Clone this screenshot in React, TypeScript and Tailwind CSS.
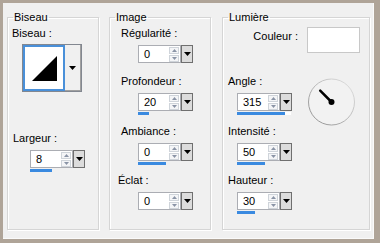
import React from 'react';

const ArrowBtn = ({ up }: { up?: boolean }) => (
  <div className="h-[7px] w-[10px] border border-[#cfd4da] bg-[#f4f5f7] flex items-center justify-center">
    <svg width="5" height="3" viewBox="0 0 5 3">
      <path d={up ? 'M0 3L2.5 0L5 3Z' : 'M0 0L2.5 3L5 0Z'} fill="#8a94a6" />
    </svg>
  </div>
);

const DropTri = () => (
  <svg width="7" height="4" viewBox="0 0 7 4">
    <path d="M0 0L7 0L3.5 4Z" fill="#000" />
  </svg>
);

const Spin = ({ value, bar, track }: { value: string; bar?: number; track?: boolean }) => (
  <div className="flex flex-col w-[55px]">
    <div className="flex h-[18px]">
      <div className="flex flex-1 items-center bg-white border border-[#abadb3] pl-[5px] pr-[1px]">
        <span className="flex-1 text-[11px] leading-[13px] text-black">{value}</span>
        <div className="flex flex-col gap-[1px]">
          <ArrowBtn up />
          <ArrowBtn />
        </div>
      </div>
      <div className="w-[12px] border border-[#6f6f6f] bg-[#dcdcdc] flex items-center justify-center">
        <DropTri />
      </div>
    </div>
    <div className="h-[4px] pt-[1px]">
      <div className={track ? 'h-[3px] w-[54px] bg-white flex' : 'h-[3px] flex'}>
        {bar ? <div className="h-[3px] bg-[#3a8ae0]" style={{ width: bar }} /> : null}
      </div>
    </div>
  </div>
);

const Row = ({ label, value, bar, track, mt, lx, sx }: { label: string; value: string; bar?: number; track?: boolean; mt: string; lx: string; sx: string }) => (
  <div className={`flex flex-col ${mt}`}>
    <div className={`text-[11px] leading-[13px] ${lx}`}>{label}</div>
    <div className={`mt-[5px] ${sx}`}>
      <Spin value={value} bar={bar} track={track} />
    </div>
  </div>
);

const Group = ({ title, width, className, children }: { title: string; width: string; className?: string; children: React.ReactNode }) => (
  <fieldset className={`${width} h-[219px] mt-[8px] border border-[#d5d5d5] shadow-[1px_1px_0_#fff,inset_1px_1px_0_#fff] ${className ?? ''}`}>
    <legend className="ml-[5px] px-[1px] text-[11px] leading-[13px]">{title}</legend>
    {children}
  </fieldset>
);

export default function App() {
  return (
    <div className="w-[380px] h-[243px] bg-[#afa498] pt-[3px] pl-[3px] font-['Liberation_Sans',Arial,sans-serif] text-black">
      <div className="w-[371px] h-[236px] bg-[#f0f0f0] border-r border-b border-[#fafafa] flex">
        {/* Biseau */}
        <Group title="Biseau" width="w-[92px]" className="ml-[4px]">
          <div className="flex flex-col">
            <div className="mt-[3px] ml-[4px] text-[11px] leading-[13px]">Biseau :</div>
            <div className="mt-[4px] ml-[14px] flex w-[60px] h-[48px] border border-[#828790] bg-[#f0f0f0]">
              <div className="w-[42px] h-full border-2 border-[#4a90d9] bg-white">
                <svg width="38" height="42" viewBox="0 0 38 42">
                  <path d="M7 34L32 34L32 9Z" fill="#000" />
                </svg>
              </div>
              <div className="flex-1 flex items-center justify-center border-r border-b border-[#a0a0a0]">
                <DropTri />
              </div>
            </div>
            <Row label="Largeur :" value="8" bar={22} mt="mt-[40px]" lx="ml-[5px]" sx="ml-[22px]" />
          </div>
        </Group>

        {/* Image */}
        <Group title="Image" width="w-[102px]" className="ml-[10px]">
          <div className="flex flex-col">
            <Row label="Régularité :" value="0" mt="mt-[3px]" lx="ml-[11px]" sx="ml-[28px]" />
            <Row label="Profondeur :" value="20" bar={11} mt="mt-[8px]" lx="ml-[11px]" sx="ml-[28px]" />
            <Row label="Ambiance :" value="0" bar={28} mt="mt-[10px]" lx="ml-[11px]" sx="ml-[28px]" />
            <Row label="Éclat :" value="0" mt="mt-[9px]" lx="ml-[8px]" sx="ml-[28px]" />
          </div>
        </Group>

        {/* Lumière */}
        <Group title="Lumière" width="w-[148px]" className="ml-[11px]">
          <div className="flex flex-col">
            <div className="mt-[3px] mr-[9px] flex justify-end items-start gap-[9px]">
              <div className="mt-[3px] text-[11px] leading-[13px]">Couleur :</div>
              <div className="w-[53px] h-[26px] bg-white border border-[#c8c8c8]" />
            </div>
            <div className="flex">
              <div className="w-[84px] flex flex-col">
                <Row label="Angle :" value="315" bar={48} track mt="mt-[22px]" lx="ml-[5px]" sx="ml-[14px]" />
                <Row label="Intensité :" value="50" bar={28} mt="mt-[10px]" lx="ml-[5px]" sx="ml-[14px]" />
                <Row label="Hauteur :" value="30" bar={18} mt="mt-[9px]" lx="ml-[5px]" sx="ml-[14px]" />
              </div>
              <svg className="mt-[25px]" width="49" height="49" viewBox="0 0 49 49">
                <defs>
                  <linearGradient id="ring" x1="1" y1="0" x2="0" y2="1">
                    <stop offset="0" stopColor="#e4e4e4" />
                    <stop offset="1" stopColor="#8c8c8c" />
                  </linearGradient>
                </defs>
                <circle cx="24.5" cy="24" r="23" fill="#f2f2f2" stroke="url(#ring)" strokeWidth="1" />
                <line x1="24.5" y1="24" x2="13.2" y2="12.7" stroke="#000" strokeWidth="2.5" strokeLinecap="round" />
                <circle cx="24.5" cy="24" r="3" fill="#000" />
              </svg>
            </div>
          </div>
        </Group>
      </div>
    </div>
  );
}
